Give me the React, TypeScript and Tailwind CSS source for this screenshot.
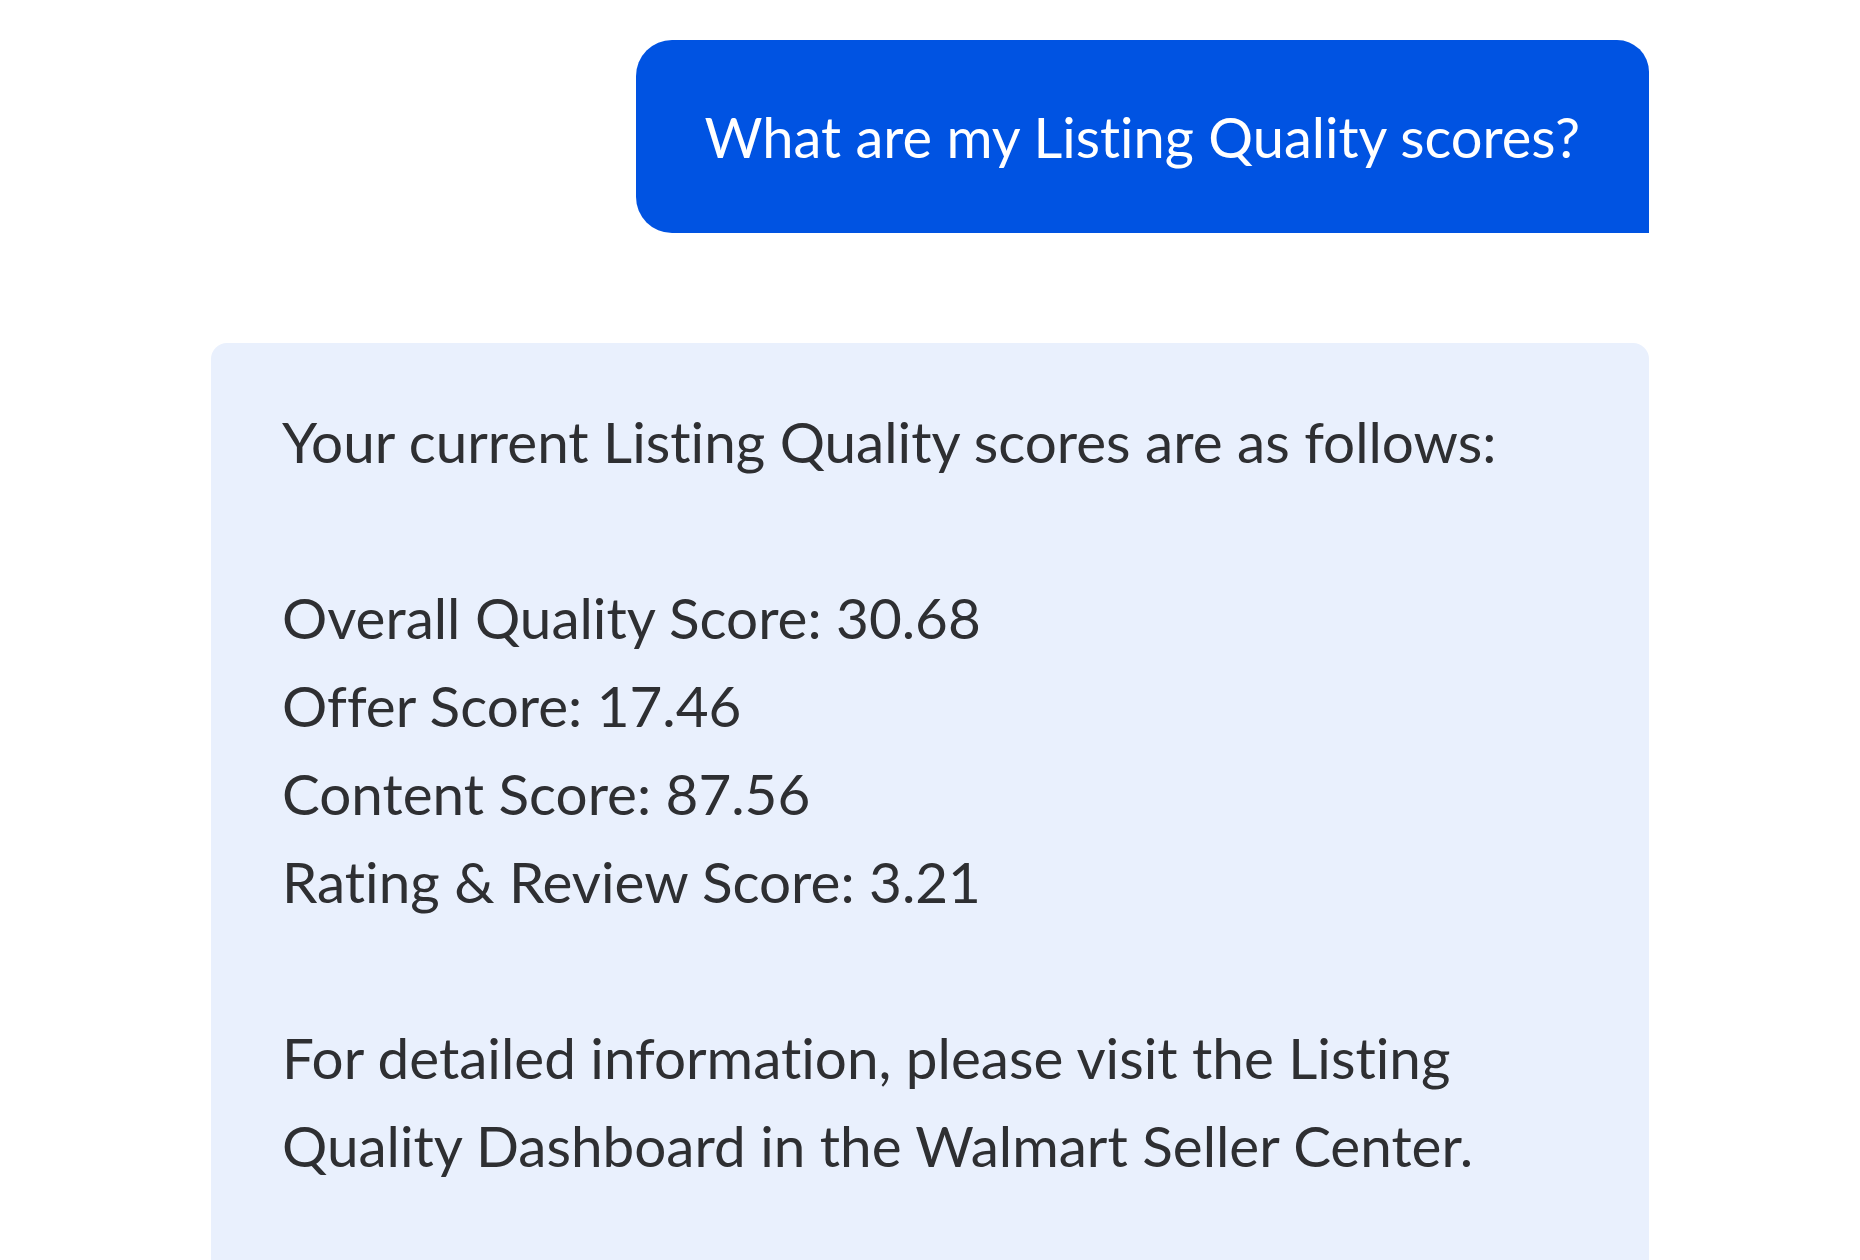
export default function App() {
  return (
    <div className="min-h-screen bg-white px-[211px] pt-[40px] font-['Lato',sans-serif] [font-variant-ligatures:none]">
      {/* User message */}
      <div className="flex justify-end">
        <div className="bg-[#0053e2] text-white text-[56px] leading-[1.2] px-[69px] h-[193px] flex items-center rounded-tl-[36px] rounded-tr-[32px] rounded-bl-[36px]">
          What are my Listing Quality scores?
        </div>
      </div>

      {/* Assistant reply */}
      <div className="mt-[110px] bg-[#e9f0fd] rounded-t-[16px] px-[71px] pt-[54px] pb-[80px] text-[#2e2f32] text-[56.6px] leading-[88px]">
        <p>Your current Listing Quality scores are as follows:</p>
        <p>&nbsp;</p>
        <p>Overall Quality Score: 30.68</p>
        <p>Offer Score: 17.46</p>
        <p>Content Score: 87.56</p>
        <p>Rating &amp; Review Score: 3.21</p>
        <p>&nbsp;</p>
        <p>
          For detailed information, please visit the Listing
          <br />
          Quality Dashboard in the Walmart Seller Center.
        </p>
      </div>
    </div>
  );
}
